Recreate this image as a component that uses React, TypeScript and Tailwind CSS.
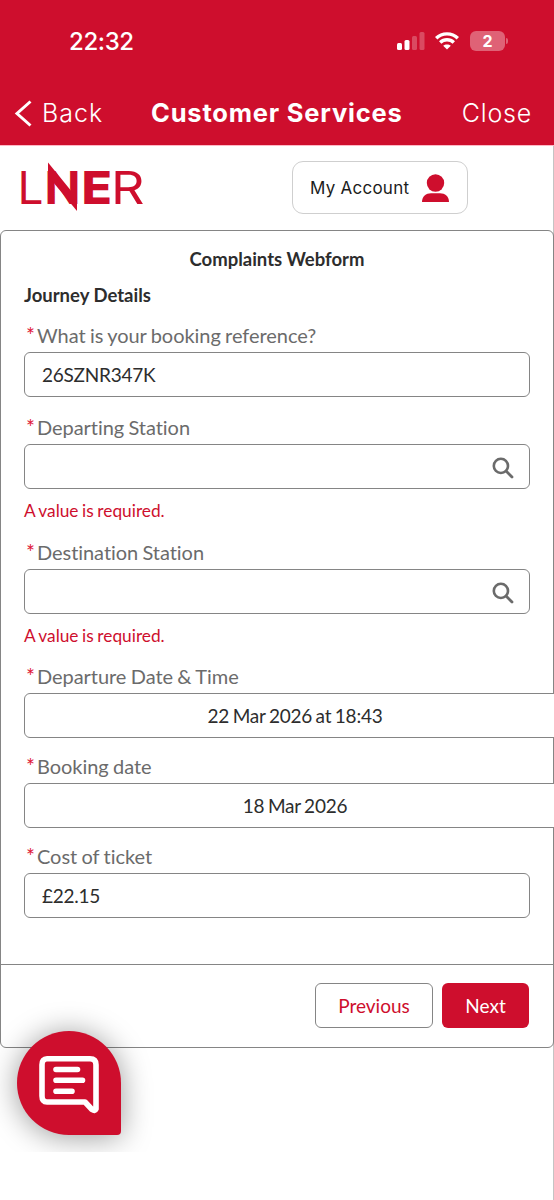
import React, { useState } from "react";

type FieldProps = {
  label: string;
  className?: string;
  children: React.ReactNode;
};

const Field: React.FC<FieldProps> = ({ label, className = "", children }) => (
  <div className={className}>
    <label className="flex h-[26px] items-center pl-[3px] text-[20px] leading-[26px] tracking-[-0.05px] text-[#6b6b6b] [word-spacing:-0.7px]">
      <span className="mr-[2px] ml-[-1px] w-[9px] text-[21px] text-[#e0183a]">*</span>
      <span>{label}</span>
    </label>
    {children}
  </div>
);

const boxClass =
  "flex h-[45px] items-center rounded-[6px] border border-[#858585] bg-white text-[19px] tracking-[-0.25px] text-[#2d2d2d] [word-spacing:-1px]";

const SearchBox: React.FC = () => (
  <div className={`${boxClass} mt-[4px] justify-end pt-[2px] pr-[15px]`}>
    <svg className="h-[22px] w-[22px]" viewBox="0 0 22 22" fill="none" stroke="#6b6b6b" strokeLinecap="round">
      <circle cx="8.9" cy="8.9" r="7.1" strokeWidth="2.6" />
      <path d="M14.3 14.3L20 20" strokeWidth="2.8" />
    </svg>
  </div>
);

const ErrorText: React.FC = () => (
  <p className="mt-[10px] text-[17.3px] leading-[24px] text-[#ce0e2d] [word-spacing:-0.8px]">A value is required.</p>
);

const StatusBar: React.FC = () => (
  <div className="flex h-[82px] items-center justify-between pr-[46px] pl-[69px]">
    <span className="pt-[1px] font-['Inter'] text-[24px] font-medium tracking-[-0.4px]">22:32</span>
    <div className="flex items-center">
      <svg className="h-[18px] w-[28px]" viewBox="0 0 28 18" fill="white">
        <rect x="0" y="11" width="5" height="7" rx="1.5" />
        <rect x="7.5" y="8" width="5" height="10" rx="1.5" />
        <rect x="15" y="4" width="5" height="14" rx="1.5" opacity="0.25" />
        <rect x="22.5" y="0" width="5" height="18" rx="1.5" opacity="0.25" />
      </svg>
      <svg className="ml-[10px] h-[18px] w-[24px]" viewBox="0 0 24 18" fill="none" stroke="white" strokeWidth="3.4">
        <path d="M1.2 6.2C7 .4 17 .4 22.8 6.2" />
        <path d="M5.2 10.5C9 6.8 15 6.8 18.8 10.5" />
        <path d="M8.2 13.8C10.2 12 13.8 12 15.8 13.8L12 17.6Z" fill="white" stroke="none" />
      </svg>
      <div className="ml-[11px] flex h-[20px] w-[35px] items-center justify-center rounded-[6px] bg-white/35 font-['Inter'] text-[16px] font-bold">2</div>
      <div className="ml-[1px] h-[6px] w-[2px] rounded-r-full bg-white/35" />
    </div>
  </div>
);

const Logo: React.FC = () => (
  <svg className="h-[50px] w-[124px] overflow-visible" viewBox="0 0 124 50" fill="#ce0e2d" fontFamily="Inter, sans-serif" fontSize="45.5">
    <text x="-2.6" y="41.5" fontWeight="400" textLength="26" lengthAdjust="spacingAndGlyphs">L</text>
    <text x="24.5" y="41.5" fontWeight="700" textLength="36" lengthAdjust="spacingAndGlyphs">N</text>
    <text x="61.5" y="41.5" fontWeight="800" textLength="30.5" lengthAdjust="spacingAndGlyphs">E</text>
    <text x="91" y="41.5" fontWeight="400" textLength="33.5" lengthAdjust="spacingAndGlyphs">R</text>
    {/* long diagonal that sticks out above and below the N */}
    <path d="M28 0.5L57 36V49L28 14Z" />
  </svg>
);

const App: React.FC = () => {
  const [reference, setReference] = useState("26SZNR347K");
  const [cost, setCost] = useState("£22.15");

  return (
    <div className="flex h-[1200px] w-full flex-col overflow-hidden bg-white font-['Lato',sans-serif] [font-variant-ligatures:none]">
      <header className="h-[146px] shrink-0 border-b border-[#ffb8c6] bg-[#ce0e2d] text-white">
        <StatusBar />
        <nav className="flex h-[63px] items-center justify-between pr-[22px] pl-[14px] font-['Inter']">
          <button className="flex w-[137px] items-center text-[25px] font-light tracking-[1px]">
            <svg className="mr-[10px] h-[27px] w-[18px]" viewBox="0 0 18 27" fill="none" stroke="white" strokeWidth="3">
              <path d="M16.5 1.5L3 13.5L16.5 25.5" />
            </svg>
            Back
          </button>
          <h1 className="grow text-[25.5px] font-bold tracking-[0.8px]">Customer Services</h1>
          <button className="text-[25px] font-light tracking-[0.8px]">Close</button>
        </nav>
      </header>

      <div className="grow border-r border-[#c4c4c4]">
        <div className="flex h-[84px] items-start justify-between pt-[15px] pr-[85px] pl-[20px]">
          <div className="pt-[1px]">
            <Logo />
          </div>
          <button className="flex h-[53px] w-[176px] items-center justify-between rounded-[11px] border border-[#cfcfcf] pr-[18px] pl-[17px] font-['Inter'] text-[17px] tracking-[0.25px] text-[#1c1c1c]">
            <span className="pt-[2px]">My Account</span>
            <svg className="h-[28px] w-[27px]" viewBox="0 0 27 28" fill="#ce0e2d">
              <circle cx="13.5" cy="9" r="8.7" />
              <path d="M0 28C0 22.5 4 19.2 9 19.2H18C23 19.2 27 22.5 27 28Z" />
            </svg>
          </button>
        </div>

        <main className="-mr-px h-[818px] rounded-[6px] border border-[#858585]">
          <div className="h-[733px] px-[23px]">
            <h2 className="pt-[16px] text-center text-[18.5px] leading-[24px] font-bold text-[#2d2d2d]">Complaints Webform</h2>
            <h3 className="mt-[12px] text-[18.5px] leading-[24px] font-bold text-[#2d2d2d]">Journey Details</h3>

            <Field label="What is your booking reference?" className="mt-[15px]">
              <input value={reference} onChange={(e) => setReference(e.target.value)} className={`${boxClass} mt-[4px] w-full px-[17px] pb-[1px]`} />
            </Field>
            <Field label="Departing Station" className="mt-[17px]">
              <SearchBox />
              <ErrorText />
            </Field>
            <Field label="Destination Station" className="mt-[16px]">
              <SearchBox />
              <ErrorText />
            </Field>
            <Field label="Departure Date & Time" className="mt-[15px]">
              <div className={`${boxClass} mt-[4px] w-[542px] justify-center pt-[1px]`}>22 Mar 2026 at 18:43</div>
            </Field>
            <Field label="Booking date" className="mt-[15px]">
              <div className={`${boxClass} mt-[4px] w-[542px] justify-center pt-[1px]`}>18 Mar 2026</div>
            </Field>
            <Field label="Cost of ticket" className="mt-[15px]">
              <input value={cost} onChange={(e) => setCost(e.target.value)} className={`${boxClass} mt-[4px] w-full px-[17px]`} />
            </Field>
          </div>
          <footer className="flex justify-end gap-[9px] border-t border-[#858585] pt-[18px] pr-[24px] text-[19px]">
            <button className="h-[45px] w-[118px] rounded-[6px] border border-[#858585] pt-[2px] text-[#ce0e2d]">Previous</button>
            <button className="h-[45px] w-[87px] rounded-[6px] bg-[#ce0e2d] pt-[2px] text-white">Next</button>
          </footer>
        </main>
      </div>

      {/* Chat launcher */}
      <div className="absolute top-[1000px] left-0 h-[152px] w-[170px] overflow-hidden">
        <button className="absolute top-[31px] left-[17px] h-[104px] w-[104px] rounded-[52px_52px_4px_52px] bg-[#ce0e2d] shadow-[0_2px_30px_rgba(0,0,0,0.4)]">
          <svg className="absolute top-[25px] left-[22px] h-[58px] w-[60px]" viewBox="0 0 60 58" fill="none" stroke="white" strokeLinecap="round" strokeLinejoin="round">
            <path d="M8 2.8H51Q57 2.8 57 8.8V53Q56 55.5 53 53.5L46 46H8Q3 46 3 40V8.8Q3 2.8 8 2.8Z" strokeWidth="5.6" />
            <path d="M17 13.5H38.5M17 24.3H43.5M17 35.2H33" strokeWidth="5.6" />
          </svg>
        </button>
      </div>
    </div>
  );
};

export default App;
